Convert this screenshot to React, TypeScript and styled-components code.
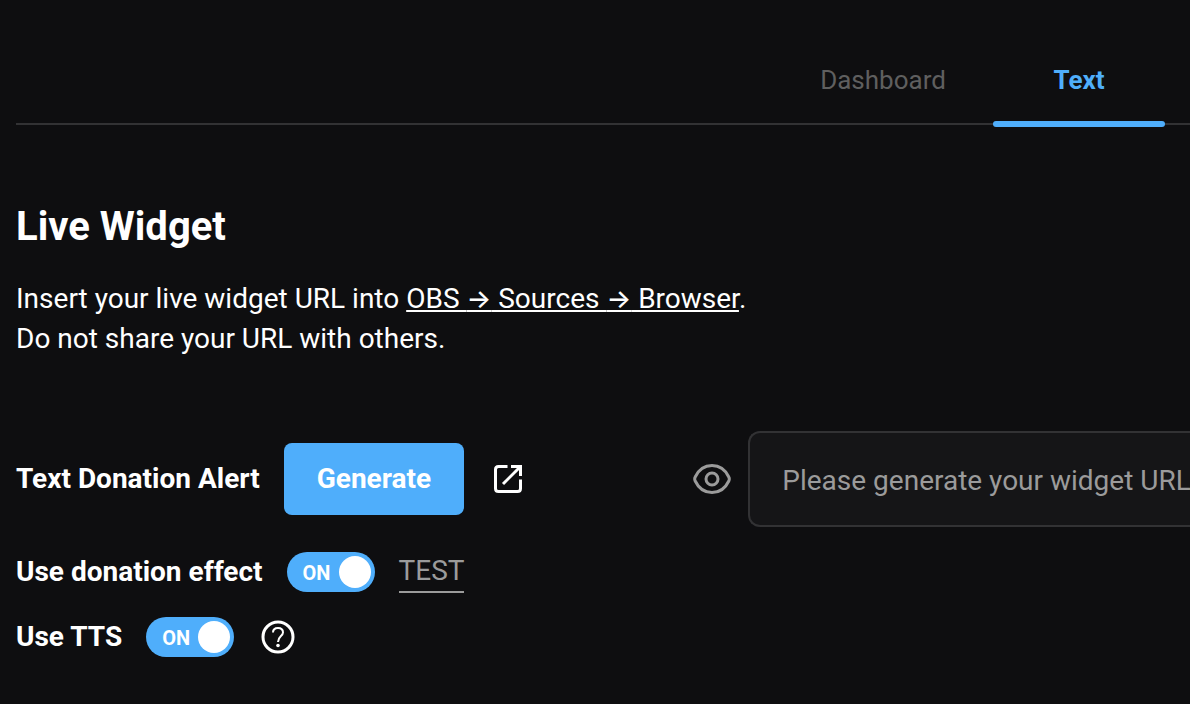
import React, { useState } from "react";
import styled, { createGlobalStyle } from "styled-components";

const color = {
  page: "#0e0e10",
  field: "#151517",
  line: "#323234",
  accent: "#4faefb",
  muted: "#9b9b9b",
  dim: "#5f5f5f",
  text: "#ffffff",
};

const GlobalStyle = createGlobalStyle`
  *, *::before, *::after { box-sizing: border-box; }
  html { background: ${color.page}; }
  body {
    margin: 0;
    color: ${color.text};
    font: 400 28px/40px Roboto, Inter, sans-serif;
    overflow-x: hidden;
  }
  button, input { font: inherit; }
`;

const Page = styled.div`
  padding: 0 0 32px 16px;
`;

const Tabs = styled.nav`
  display: flex;
  justify-content: flex-end;
  gap: 24px;
  padding: 38px 25px 0 0;
  border-bottom: 2px solid ${color.line};
`;

const Tab = styled.a<{ $active?: boolean }>`
  position: relative;
  width: 172px;
  height: 85px;
  font-size: 26px;
  line-height: 84px;
  text-align: center;
  text-decoration: none;
  font-weight: ${(p) => (p.$active ? 700 : 400)};
  color: ${(p) => (p.$active ? color.accent : color.dim)};

  &::after {
    content: "";
    display: ${(p) => (p.$active ? "block" : "none")};
    position: absolute;
    left: 0;
    right: 0;
    bottom: -4px;
    height: 6px;
    border-radius: 3px;
    background: ${color.accent};
  }
`;

const Title = styled.h1`
  margin: 78px 0 28px;
  font-size: 40px;
  line-height: 48px;
  font-weight: 700;
`;

const Intro = styled.p`
  margin: 0 0 72px;
`;

const TextLink = styled.a`
  color: inherit;
  text-decoration: underline;
  text-decoration-thickness: 2px;
  text-underline-offset: 2px;
  text-decoration-skip-ink: none;
`;

const Arrow = styled.span`
  font-family: Inter, sans-serif;
  font-size: 26px;
  font-weight: 500;
  line-height: 1;
`;

const Settings = styled.main`
  display: grid;
  gap: 25px;
`;

const AlertRow = styled.section`
  display: grid;
  grid-template-columns: minmax(0, 15fr) minmax(0, 11fr);
  align-items: center;
`;

const Row = styled.div`
  display: flex;
  align-items: center;
  gap: 24px;
`;

const Label = styled.label`
  font-weight: 700;
  white-space: nowrap;
`;

const GenerateButton = styled.button`
  height: 72px;
  padding: 0 33px;
  border: 0;
  border-radius: 8px;
  background: ${color.accent};
  color: ${color.text};
  font-weight: 700;
  cursor: pointer;
`;

const IconButton = styled.button<{ $tone?: string }>`
  display: flex;
  flex: none;
  padding: 0;
  border: 0;
  background: none;
  color: ${(p) => p.$tone ?? color.text};
  cursor: pointer;
`;

const UrlGroup = styled.div`
  display: flex;
  align-items: center;
  gap: 15px;
`;

const UrlInput = styled.input`
  flex: 1;
  min-width: 0;
  height: 96px;
  padding: 2px 0 0 32px;
  border: 2px solid ${color.line};
  border-right: 0;
  border-radius: 12px 0 0 12px;
  background: ${color.field};
  color: ${color.text};
  outline: none;

  &::placeholder { color: ${color.muted}; opacity: 1; }
`;

const SwitchTrack = styled.span`
  position: relative;
  display: flex;
  align-items: center;
  width: 88px;
  height: 40px;
  padding: 2px 16px 0;
  border-radius: 20px;
  background: ${color.accent};
  font-size: 20px;
  line-height: 24px;
  font-weight: 700;
`;

const SwitchInput = styled.input`
  appearance: none;
  position: absolute;
  inset: 0;
  margin: 0;
  border-radius: 20px;
  cursor: pointer;

  &::before {
    content: "";
    position: absolute;
    top: 4px;
    left: 4px;
    width: 32px;
    height: 32px;
    border-radius: 50%;
    background: ${color.text};
  }
  &:checked::before { left: 52px; }
`;

const TestButton = styled.button`
  height: 42px;
  padding: 0;
  border: 0;
  border-bottom: 2px solid ${color.muted};
  background: none;
  color: ${color.muted};
  line-height: 38px;
  cursor: pointer;
`;

const EffectRow = styled(Row)`
  height: 40px;
`;

function Switch({ id }: { id: string }) {
  const [on, setOn] = useState(true);
  return (
    <SwitchTrack>
      {on ? "ON" : ""}
      <SwitchInput id={id} type="checkbox" role="switch" checked={on} onChange={() => setOn(!on)} />
    </SwitchTrack>
  );
}

const OpenIcon = () => (
  <svg width="40" height="40" viewBox="0 0 40 40" fill="none" stroke="currentColor" strokeWidth="3" aria-hidden="true">
    <path d="M19.500 7.500H10.500Q7.500 7.500 7.500 10.500V29.500Q7.500 32.500 10.500 32.500H29.500Q32.500 32.500 32.500 29.500V20.500" />
    <path d="M23 7.500H32.500V17" />
    <path d="M15 25L32 8" />
  </svg>
);

const EyeIcon = () => (
  <svg width="40" height="40" viewBox="0 0 40 40" fill="none" stroke="currentColor" strokeWidth="3" aria-hidden="true">
    <path d="M2.200 18C5.500 11 11.500 6.500 19 6.500S32.500 11 35.800 18Q36.800 20 35.800 22C32.500 29 26.500 33.500 19 33.500S5.500 29 2.200 22Q1.200 20 2.200 18Z" />
    <circle cx="19" cy="20" r="6" />
  </svg>
);

const HelpIcon = () => (
  <svg width="40" height="40" viewBox="0 0 40 40" fill="none" stroke="currentColor" aria-hidden="true">
    <circle cx="20" cy="20" r="15" strokeWidth="3" />
    <path d="M15 15.500C15 12.500 17 11 20 11S25 12.500 25 15.500C25 19 20 19.500 20 25" strokeWidth="2" />
    <circle cx="20" cy="28.500" r="1.800" fill="currentColor" stroke="none" />
  </svg>
);

export default function App() {
  return (
    <>
      <GlobalStyle />
      <Page>
        <Tabs aria-label="Widget sections">
          <Tab href="#dashboard">Dashboard</Tab>
          <Tab href="#text" $active aria-current="page">Text</Tab>
        </Tabs>
        <Title>Live Widget</Title>
        <Intro>
          Insert your live widget URL into{" "}
          <TextLink href="#obs">
            OBS <Arrow>→</Arrow> Sources <Arrow>→</Arrow> Browser
          </TextLink>
          .
          <br />
          Do not share your URL with others.
        </Intro>
        <Settings>
          <AlertRow>
            <Row>
              <Label htmlFor="widget-url">Text Donation Alert</Label>
              <GenerateButton type="button">Generate</GenerateButton>
              <IconButton type="button" aria-label="Open widget"><OpenIcon /></IconButton>
            </Row>
            <UrlGroup>
              <IconButton type="button" aria-label="Show URL" $tone={color.muted}><EyeIcon /></IconButton>
              <UrlInput id="widget-url" readOnly placeholder="Please generate your widget URL" />
            </UrlGroup>
          </AlertRow>
          <EffectRow>
            <Label htmlFor="effect">Use donation effect</Label>
            <Switch id="effect" />
            <TestButton type="button">TEST</TestButton>
          </EffectRow>
          <Row>
            <Label htmlFor="tts">Use TTS</Label>
            <Switch id="tts" />
            <IconButton type="button" aria-label="About TTS"><HelpIcon /></IconButton>
          </Row>
        </Settings>
      </Page>
    </>
  );
}
